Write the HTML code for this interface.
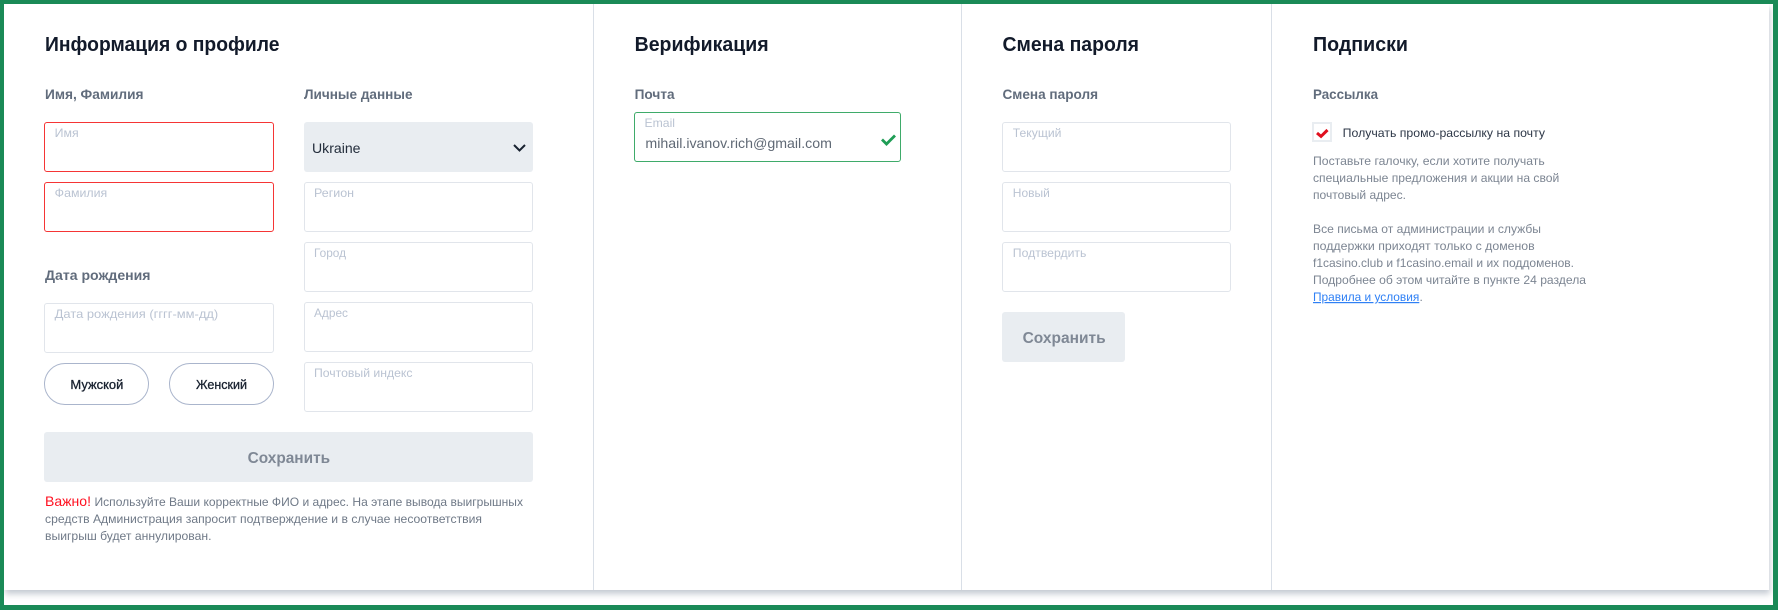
<!DOCTYPE html>
<html lang="ru"><head><meta charset="utf-8"><title>Профиль</title>
<style>
html,body{margin:0;padding:0;width:1778px;height:610px;overflow:hidden;background:#fff}
.frame{position:absolute;left:0;top:0;width:1778px;height:610px;box-sizing:border-box;border:solid #1a8a57;border-width:4px 5px 5px 4px;z-index:5;pointer-events:none;background:none}
.panel{position:absolute;left:4px;top:4px;width:1765px;height:586px;background:#fff;box-shadow:1px 4px 6px rgba(70,90,115,.32)}
.v{position:absolute;top:4px;height:586px;width:1px;background:#d9dfe7}
.f{position:absolute;box-sizing:border-box;height:50px;border:1px solid #e1e5eb;border-radius:3px;background:#fff}
.e{border-color:#f53535}
.g{border-color:#3fab6a}
.s{position:absolute;background:#e9edf1;border-radius:3px}
.p{position:absolute;box-sizing:border-box;height:42px;width:105px;top:363px;border:1px solid #aab5cc;border-radius:21px;background:#fff}
.c{position:absolute;left:1312px;top:122px;width:20px;height:20px;box-sizing:border-box;border:2px solid #e9edf1;background:#fff}
svg{position:absolute;left:0;top:0}
text{font-family:"Liberation Sans",sans-serif;white-space:pre}
.h{font-size:20px;font-weight:700;fill:#121a2a}
.l{font-size:14px;font-weight:700;fill:#616c7c}
.ph{font-size:12px;fill:#bac3d2}
.t{font-size:12px;fill:#6f7987}
.d{font-size:12px;fill:#7c8592}
.b{font-size:16px;font-weight:700;fill:#7f8895}
.m{font-size:13px;fill:#18212f;stroke:#18212f;stroke-width:.3px}
</style></head>
<body>
<div class="panel"></div>
<div class="v" style="left:593px"></div>
<div class="v" style="left:961px"></div>
<div class="v" style="left:1271px"></div>

<div class="f e" style="left:44px;top:122px;width:230px"></div>
<div class="f e" style="left:44px;top:182px;width:230px"></div>
<div class="f" style="left:44px;top:303px;width:230px"></div>
<div class="p" style="left:44px"></div>
<div class="p" style="left:169px"></div>
<div class="s" style="left:304px;top:122px;width:229px;height:50px"></div>
<div class="f" style="left:304px;top:182px;width:229px"></div>
<div class="f" style="left:304px;top:242px;width:229px"></div>
<div class="f" style="left:304px;top:302px;width:229px"></div>
<div class="f" style="left:304px;top:362px;width:229px"></div>
<div class="s" style="left:44px;top:432px;width:489px;height:50px"></div>

<div class="f g" style="left:634px;top:112px;width:267px"></div>

<div class="f" style="left:1002px;top:122px;width:229px"></div>
<div class="f" style="left:1002px;top:182px;width:229px"></div>
<div class="f" style="left:1002px;top:242px;width:229px"></div>
<div class="s" style="left:1002px;top:312px;width:123px;height:50px"></div>

<div class="c"></div>

<svg width="1778" height="610" viewBox="0 0 1778 610" xmlns="http://www.w3.org/2000/svg">
<text class="h" x="45" y="51" textLength="234.5" lengthAdjust="spacingAndGlyphs">Информация о профиле</text>
<text class="l" x="45" y="99" textLength="98.5" lengthAdjust="spacingAndGlyphs">Имя, Фамилия</text>
<text class="l" x="304" y="99" textLength="108.5" lengthAdjust="spacingAndGlyphs">Личные данные</text>
<text class="ph" x="54.7" y="137" textLength="24" lengthAdjust="spacingAndGlyphs">Имя</text>
<text class="ph" x="54.7" y="197" textLength="52.5" lengthAdjust="spacingAndGlyphs">Фамилия</text>
<text x="312" y="153" font-size="14" fill="#232d3b" textLength="48.5" lengthAdjust="spacingAndGlyphs">Ukraine</text>
<path d="M514 145l5.5 5.5 5.5-5.5" fill="none" stroke="#182230" stroke-width="2"/>
<text class="ph" x="314" y="197" textLength="40" lengthAdjust="spacingAndGlyphs">Регион</text>
<text class="ph" x="314" y="257" textLength="32" lengthAdjust="spacingAndGlyphs">Город</text>
<text class="ph" x="314" y="317" textLength="34" lengthAdjust="spacingAndGlyphs">Адрес</text>
<text class="ph" x="314" y="377" textLength="98.5" lengthAdjust="spacingAndGlyphs">Почтовый индекс</text>
<text class="l" x="45" y="280" textLength="105.5" lengthAdjust="spacingAndGlyphs">Дата рождения</text>
<text class="ph" x="54.7" y="318" textLength="163.5" lengthAdjust="spacingAndGlyphs">Дата рождения (гггг-мм-дд)</text>
<text class="m" x="70.4" y="389" textLength="53" lengthAdjust="spacingAndGlyphs">Мужской</text>
<text class="m" x="196" y="389" textLength="51" lengthAdjust="spacingAndGlyphs">Женский</text>
<text class="b" x="247.6" y="463" textLength="82.5" lengthAdjust="spacingAndGlyphs">Сохранить</text>
<text x="45" y="506" font-size="14" fill="#ff1020" textLength="46" lengthAdjust="spacingAndGlyphs">Важно!</text>
<text class="t" x="94.5" y="506" textLength="428.5" lengthAdjust="spacingAndGlyphs">Используйте Ваши корректные ФИО и адрес. На этапе вывода выигрышных</text>
<text class="t" x="45" y="523" textLength="437" lengthAdjust="spacingAndGlyphs">средств Администрация запросит подтверждение и в случае несоответствия</text>
<text class="t" x="45" y="540" textLength="166.5" lengthAdjust="spacingAndGlyphs">выигрыш будет аннулирован.</text>

<text class="h" x="634.6" y="51" textLength="134" lengthAdjust="spacingAndGlyphs">Верификация</text>
<text class="l" x="634.6" y="99" textLength="40" lengthAdjust="spacingAndGlyphs">Почта</text>
<text class="ph" x="644.5" y="127" textLength="30.5" lengthAdjust="spacingAndGlyphs">Email</text>
<text x="645.4" y="148" font-size="14" fill="#606975" textLength="186.5" lengthAdjust="spacingAndGlyphs">mihail.ivanov.rich@gmail.com</text>
<path d="M882 139.5l4.5 4.5 8.5-8.5" fill="none" stroke="#1f9d55" stroke-width="2.8"/>

<text class="h" x="1002.5" y="51" textLength="136.5" lengthAdjust="spacingAndGlyphs">Смена пароля</text>
<text class="l" x="1002.5" y="99" textLength="95.5" lengthAdjust="spacingAndGlyphs">Смена пароля</text>
<text class="ph" x="1012.8" y="137" textLength="48.6" lengthAdjust="spacingAndGlyphs">Текущий</text>
<text class="ph" x="1012.8" y="197" textLength="37" lengthAdjust="spacingAndGlyphs">Новый</text>
<text class="ph" x="1012.8" y="257" textLength="73.6" lengthAdjust="spacingAndGlyphs">Подтвердить</text>
<text class="b" x="1022.6" y="343" textLength="83" lengthAdjust="spacingAndGlyphs">Сохранить</text>

<text class="h" x="1313" y="51" textLength="95" lengthAdjust="spacingAndGlyphs">Подписки</text>
<text class="l" x="1313" y="99" textLength="65" lengthAdjust="spacingAndGlyphs">Рассылка</text>
<path d="M1317 133l4 3.4 6.5-6.4" fill="none" stroke="#e0101f" stroke-width="3"/>
<text x="1342.7" y="137" font-size="12" fill="#2d3747" textLength="202.3" lengthAdjust="spacingAndGlyphs">Получать промо-рассылку на почту</text>
<text class="d" x="1313" y="165" textLength="231.7" lengthAdjust="spacingAndGlyphs">Поставьте галочку, если хотите получать</text>
<text class="d" x="1313" y="182" textLength="246.3" lengthAdjust="spacingAndGlyphs">специальные предложения и акции на свой</text>
<text class="d" x="1313" y="199" textLength="93" lengthAdjust="spacingAndGlyphs">почтовый адрес.</text>
<text class="d" x="1313" y="233" textLength="228" lengthAdjust="spacingAndGlyphs">Все письма от администрации и службы</text>
<text class="d" x="1313" y="250" textLength="221.7" lengthAdjust="spacingAndGlyphs">поддержки приходят только с доменов</text>
<text class="d" x="1313" y="267" textLength="261" lengthAdjust="spacingAndGlyphs">f1casino.club и f1casino.email и их поддоменов.</text>
<text class="d" x="1313" y="284" textLength="273" lengthAdjust="spacingAndGlyphs">Подробнее об этом читайте в пункте 24 раздела</text>
<text x="1313" y="301" font-size="12" fill="#2f80f5" text-decoration="underline" textLength="106.3" lengthAdjust="spacingAndGlyphs">Правила и условия</text>
<text class="d" x="1419.5" y="301">.</text>
</svg>
<div class="frame"></div>
</body></html>
